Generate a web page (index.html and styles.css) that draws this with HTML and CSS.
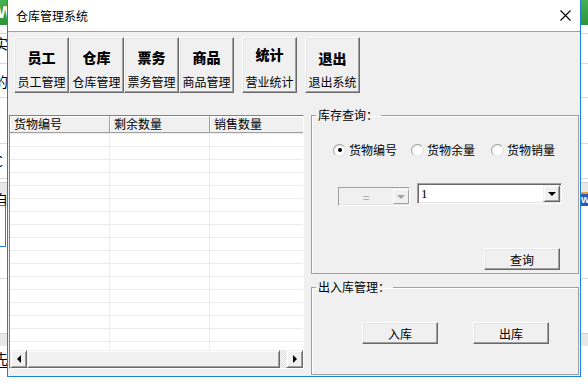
FILE: index.html
```html
<!DOCTYPE html>
<html lang="zh-CN">
<head>
    <meta charset="UTF-8">
    <title>仓库管理系统</title>
    <link rel="stylesheet" href="styles.css">
</head>
<body>
<div class="desktop">

    <!-- the app behind the dialog, only its edges show -->
    <div class="behind">
        <div class="behind-bar"><span class="behind-logo">W</span></div>
        <div class="behind-line" style="top: 33px"></div>
        <div class="behind-line" style="top: 63px"></div>
        <div class="behind-line" style="top: 97px"></div>
        <div class="behind-line" style="top: 143px"></div>
        <div class="behind-line" style="top: 178px"></div>
        <div class="behind-band" style="top: 182px"></div>
        <div class="behind-line" style="top: 278px"></div>
        <div class="behind-band" style="top: 333px"></div>
        <span class="behind-char" style="top: 34px">实</span>
        <span class="behind-char" style="top: 72px">的</span>
        <span class="behind-char" style="top: 117px">/</span>
        <span class="behind-char" style="top: 152px">C</span>
        <span class="behind-char" style="top: 190px">自</span>
        <span class="behind-char behind-under" style="top: 349px">先</span>
        <div class="behind-box"></div>
        <div class="behind-icon">W</div>
    </div>

    <div class="window">
        <div class="titlebar">
            <span class="title">仓库管理系统</span>
            <svg class="close" width="11" height="11" viewBox="0 0 11 11">
                <path d="M0.5 0.5 L10.5 10.5 M10.5 0.5 L0.5 10.5" stroke="#000" stroke-width="1.1" fill="none"/>
            </svg>
        </div>

        <div class="client">
            <div class="toolbar">
                <button class="tool"><b>员工</b><span>员工管理</span></button>
                <button class="tool"><b>仓库</b><span>仓库管理</span></button>
                <button class="tool"><b>票务</b><span>票务管理</span></button>
                <button class="tool"><b>商品</b><span>商品管理</span></button>
                <button class="tool tool-apart tool-high"><b>统计</b><span>营业统计</span></button>
                <button class="tool tool-apart tool-low"><b>退出</b><span>退出系统</span></button>
            </div>

            <div class="main">
                <div class="listview">
                    <div class="lv-view">
                        <table class="grid">
                            <thead>
                                <tr><th>货物编号</th><th>剩余数量</th><th>销售数量</th></tr>
                            </thead>
                            <tbody>
                                <tr><td></td><td></td><td></td></tr>
                                <tr><td></td><td></td><td></td></tr>
                                <tr><td></td><td></td><td></td></tr>
                                <tr><td></td><td></td><td></td></tr>
                                <tr><td></td><td></td><td></td></tr>
                                <tr><td></td><td></td><td></td></tr>
                                <tr><td></td><td></td><td></td></tr>
                                <tr><td></td><td></td><td></td></tr>
                                <tr><td></td><td></td><td></td></tr>
                                <tr><td></td><td></td><td></td></tr>
                                <tr><td></td><td></td><td></td></tr>
                                <tr><td></td><td></td><td></td></tr>
                                <tr><td></td><td></td><td></td></tr>
                                <tr><td></td><td></td><td></td></tr>
                                <tr><td></td><td></td><td></td></tr>
                                <tr><td></td><td></td><td></td></tr>
                                <tr><td></td><td></td><td></td></tr>
                            </tbody>
                        </table>
                    </div>
                    <div class="hscroll">
                        <div class="sb-btn"><i class="arrow-left"></i></div>
                        <div class="sb-thumb"></div>
                        <div class="sb-track"></div>
                        <div class="sb-btn"><i class="arrow-right"></i></div>
                    </div>
                </div>

                <div class="side">
                    <fieldset class="group group-query">
                        <legend>库存查询：</legend>
                        <div class="radios">
                            <label class="radio"><i class="dot checked"></i>货物编号</label>
                            <label class="radio"><i class="dot"></i>货物余量</label>
                            <label class="radio"><i class="dot"></i>货物销量</label>
                        </div>
                        <div class="combos">
                            <div class="combo combo-off">
                                <span class="combo-text">=</span>
                                <span class="combo-btn"><i class="arrow-down"></i></span>
                            </div>
                            <div class="combo combo-on">
                                <span class="combo-text">1</span>
                                <span class="combo-btn"><i class="arrow-down"></i></span>
                            </div>
                        </div>
                        <div class="query-row">
                            <button class="push">查询</button>
                        </div>
                    </fieldset>

                    <fieldset class="group group-stock">
                        <legend>出入库管理：</legend>
                        <div class="stock-row">
                            <button class="push">入库</button>
                            <button class="push">出库</button>
                        </div>
                    </fieldset>
                </div>
            </div>
        </div>
    </div>
</div>
</body>
</html>
```

FILE: styles.css
```css
body {
    margin: 0;
    font-family: "Noto Sans CJK SC", "Noto Sans", sans-serif;
    font-size: 12px;
    color: #000;
    background-color: #fff;
}

.desktop {
    position: relative;
    width: 588px;
    height: 384px;
    overflow: hidden;
}

/* background app */
.behind {
    position: absolute;
    inset: 0;
    background-color: #fff;
}
.behind-bar {
    height: 25px;
    background: linear-gradient(#46b14e, #2e9439);
}
.behind-logo {
    position: absolute;
    left: -3px;
    top: 3px;
    color: #fff;
    font-family: "Liberation Sans", sans-serif;
    font-weight: bold;
    font-size: 17px;
}
.behind-line {
    position: absolute;
    left: 0;
    right: 0;
    height: 1px;
    background-color: #d9d9d9;
}
.behind-band {
    position: absolute;
    left: 0;
    right: 0;
    height: 12px;
    background-color: #e8e8e8;
    border-top: 1px solid #d0d0d0;
}
.behind-char {
    position: absolute;
    left: -6px;
    font-size: 14px;
    line-height: 18px;
}
.behind-under {
    border-bottom: 1px solid #000;
}
.behind-box {
    position: absolute;
    left: -4px;
    top: 205px;
    width: 8px;
    height: 40px;
    border: 1px solid #2b79d0;
}
.behind-icon {
    position: absolute;
    left: 581px;
    top: 192px;
    width: 10px;
    height: 12px;
    background-color: #2b5cb5;
    color: #fff;
    font-family: "Liberation Sans", sans-serif;
    font-size: 9px;
    font-weight: bold;
    line-height: 12px;
    border-top: 2px solid #e8a030;
}

/* dialog */
.window {
    position: absolute;
    left: 7px;
    top: -1px;
    width: 572px;
    border: 1px solid #1883d7;
    background-color: #f0f0f0;
}
.titlebar {
    height: 31px;
    background-color: #fff;
    border-bottom: 1px solid #a0a0a0;
    display: flex;
    align-items: center;
    justify-content: space-between;
    padding: 0 9px 0 8px;
}
.title {
    font-size: 12px;
}

.client {
    height: 344px;
    padding: 5px 1px 0 1px;
    box-sizing: border-box;
}

.toolbar {
    display: flex;
    height: 56px;
    padding-left: 5px;
}
.tool {
    width: 55px;
    height: 56px;
    box-sizing: border-box;
    padding: 11px 0 0 0;
    margin: 0;
    display: flex;
    flex-direction: column;
    align-items: center;
    font-family: inherit;
    color: #000;
    background-color: #f0f0f0;
    border: 1px solid;
    border-color: #fff #696969 #696969 #fff;
    box-shadow: inset -1px -1px 0 #a0a0a0, inset 1px 1px 0 #e3e3e3;
}
.tool b {
    font-size: 14px;
    line-height: 16px;
    font-weight: 900;
}
.tool span {
    margin-top: 10px;
    font-size: 12px;
    line-height: 14px;
    white-space: nowrap;
}
.tool-apart {
    margin-left: 8px;
}
.tool-high b {
    margin-top: -3px;
}
.tool-high span {
    margin-top: 13px;
}
.tool-low b {
    margin-top: 1px;
}
.tool-low span {
    margin-top: 9px;
}

.main {
    display: flex;
    align-items: flex-start;
    margin-top: 15px;
}

/* list view */
.listview {
    width: 295px;
    height: 254px;
    margin-top: 7px;
    box-sizing: border-box;
    border: 1px solid;
    border-color: #828282 #fff #fff #828282;
    background-color: #fff;
    display: flex;
    flex-direction: column;
}
.lv-view {
    height: 234px;
    overflow: hidden;
}
.grid {
    border-collapse: separate;
    border-spacing: 0;
    table-layout: fixed;
    width: 300px;
}
.grid th {
    width: 100px;
    height: 17px;
    padding: 0 0 0 4px;
    box-sizing: border-box;
    text-align: left;
    font-weight: normal;
    font-size: 12px;
    line-height: 16px;
    background-color: #f0f0f0;
    border-right: 1px solid #a0a0a0;
    border-bottom: 1px solid #a0a0a0;
    box-shadow: inset 1px 1px 0 #fff;
}
.grid td {
    height: 12px;
    padding: 0;
    border-top: 1px solid #ececec;
    border-right: 1px solid #ececec;
}

.hscroll {
    height: 18px;
    display: flex;
    background-color: #f0f0f0;
}
.sb-btn, .sb-thumb {
    box-sizing: border-box;
    background-color: #f0f0f0;
    border: 1px solid;
    border-color: #f0f0f0 #696969 #696969 #f0f0f0;
    box-shadow: inset 1px 1px 0 #fff, inset -1px -1px 0 #a0a0a0;
}
.sb-btn {
    width: 17px;
    display: flex;
    align-items: center;
    justify-content: center;
}
.sb-thumb {
    width: 253px;
}
.sb-track {
    width: 6px;
    background: repeating-conic-gradient(#fff 0 25%, #d8d8d8 0 50%) 0 0 / 2px 2px;
}
.arrow-left {
    border-top: 4px solid transparent;
    border-bottom: 4px solid transparent;
    border-right: 4px solid #000;
}
.arrow-right {
    border-top: 4px solid transparent;
    border-bottom: 4px solid transparent;
    border-left: 4px solid #000;
}

/* right side */
.side {
    width: 268px;
    margin-left: 7px;
    display: flex;
    flex-direction: column;
}
.group {
    margin: 0;
    padding: 0;
    min-width: 0;
    box-sizing: border-box;
    border: 1px solid #a0a0a0;
    box-shadow: inset 1px 1px 0 #fff;
}
.group legend {
    margin-left: 4px;
    padding: 0 3px 0 2px;
    font-size: 12px;
    line-height: 14px;
}
.group-query {
    height: 166px;
}
.group-stock {
    height: 95px;
    margin-top: 6px;
}

.radios {
    display: grid;
    grid-template-columns: 78px 80px auto;
    margin: 20px 0 0 21px;
    height: 16px;
}
.radio {
    display: flex;
    align-items: center;
    gap: 3px;
    line-height: 16px;
}
.dot {
    width: 13px;
    height: 13px;
    box-sizing: border-box;
    border-radius: 50%;
    border: 1px solid;
    border-color: #a0a0a0 #e3e3e3 #e3e3e3 #a0a0a0;
    background: radial-gradient(circle, #fff 40%, #e8e8e8);
    position: relative;
}
.dot.checked::after {
    content: "";
    position: absolute;
    left: 3.5px;
    top: 3.5px;
    width: 4px;
    height: 4px;
    border-radius: 50%;
    background-color: #000;
}

.combos {
    display: flex;
    align-items: flex-start;
    margin-top: 25px;
}
.combo {
    display: flex;
    align-items: center;
    box-sizing: border-box;
}
.combo-off {
    width: 72px;
    height: 19px;
    margin: 4px 0 0 26px;
    border: 1px solid;
    border-color: #a0a0a0 #fff #fff #a0a0a0;
    box-shadow: inset -1px -1px 0 #e3e3e3;
    background-color: #f0f0f0;
}
.combo-off .combo-text {
    flex: 1;
    text-align: center;
    color: #a0a0a0;
}
.combo-on {
    width: 145px;
    height: 21px;
    margin-left: 7px;
    border: 1px solid;
    border-color: #a0a0a0 #fff #fff #a0a0a0;
    box-shadow: inset 1px 1px 0 #696969, inset -1px -1px 0 #e3e3e3;
    background-color: #fff;
}
.combo-on .combo-text {
    flex: 1;
    padding-left: 3px;
    font-family: "Liberation Serif", serif;
    font-size: 13px;
}
.combo-btn {
    width: 17px;
    height: 17px;
    box-sizing: border-box;
    display: flex;
    align-items: center;
    justify-content: center;
    background-color: #f0f0f0;
    border: 1px solid;
    border-color: #f0f0f0 #696969 #696969 #f0f0f0;
    box-shadow: inset 1px 1px 0 #fff, inset -1px -1px 0 #a0a0a0;
    margin-right: 1px;
}
.combo-off .combo-btn {
    width: 16px;
    height: 15px;
    border-color: #fff #a0a0a0 #a0a0a0 #fff;
    box-shadow: none;
    margin-right: 0;
}
.arrow-down {
    border-left: 4px solid transparent;
    border-right: 4px solid transparent;
    border-top: 4px solid #000;
}
.combo-off .arrow-down {
    border-top-color: #a0a0a0;
}

.push {
    width: 76px;
    height: 22px;
    box-sizing: border-box;
    padding: 0;
    margin: 0;
    font-family: inherit;
    font-size: 12px;
    color: #000;
    background-color: #f0f0f0;
    border: 1px solid;
    border-color: #fff #696969 #696969 #fff;
    box-shadow: inset -1px -1px 0 #a0a0a0, inset 1px 1px 0 #e3e3e3;
}
.query-row {
    display: flex;
    justify-content: flex-end;
    margin: 42px 18px 0 0;
}
.stock-row {
    display: flex;
    gap: 35px;
    margin: 28px 0 0 50px;
}
```
